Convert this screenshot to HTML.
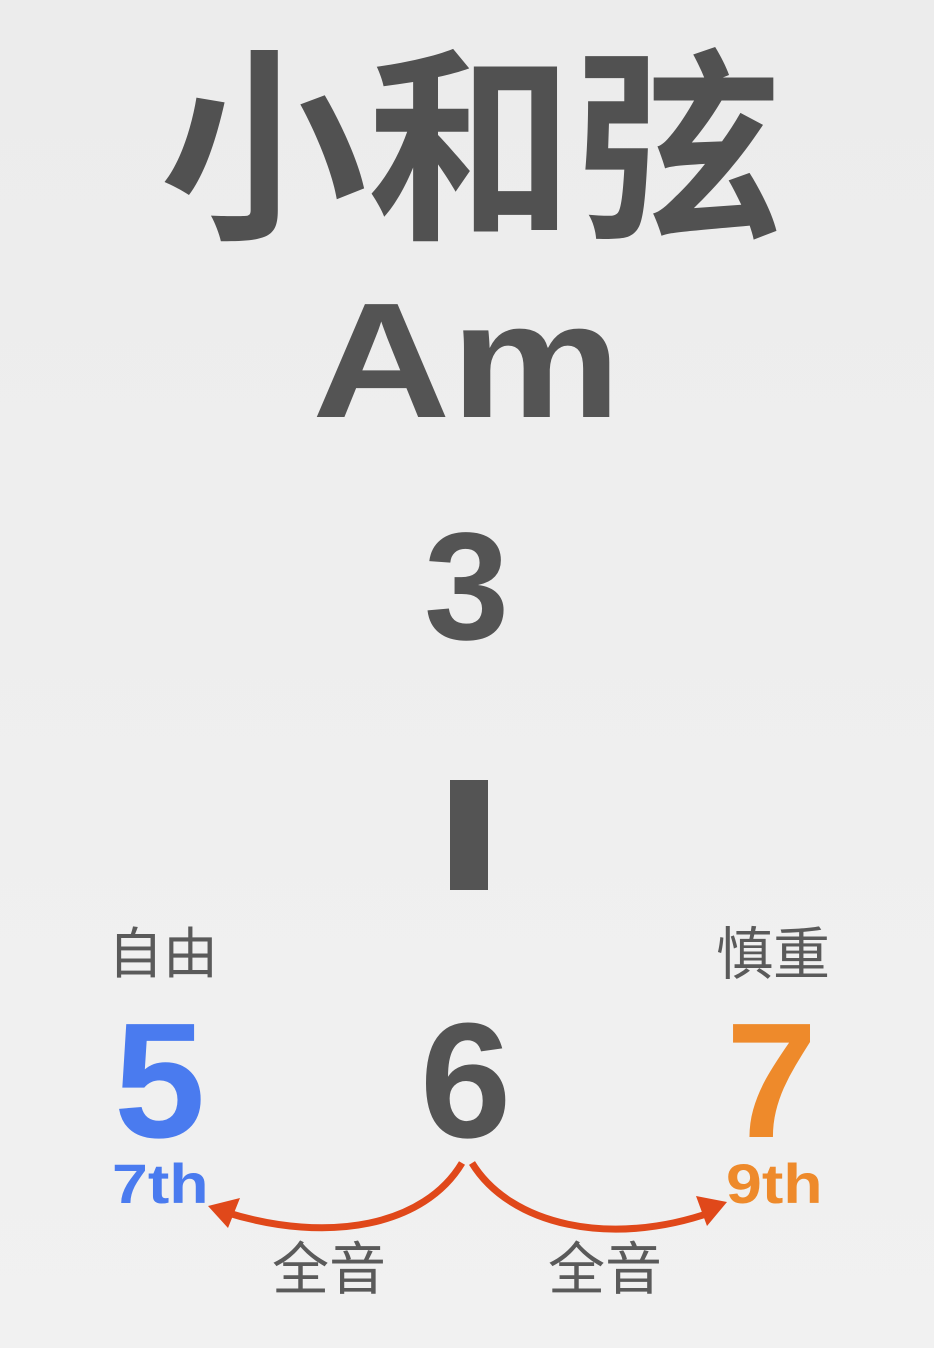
<!DOCTYPE html>
<html><head><meta charset="utf-8"><style>
html,body{margin:0;padding:0}
body{width:934px;height:1348px;position:relative;overflow:hidden;background:linear-gradient(180deg,#ececec 0%,#efefef 60%,#f1f1f1 100%);font-family:"Liberation Sans","Noto Sans CJK SC",sans-serif;color:#545454}
.a{position:absolute;line-height:1;white-space:nowrap}
.cjk{font-family:"Noto Sans CJK SC","WenQuanYi Zen Hei",sans-serif}
.b{font-weight:bold}
</style></head><body>
<div class="a cjk b" style="left:160px;top:30px;font-size:207px;color:#515151">小和弦</div>
<div class="a b" style="left:312px;top:279px;font-size:164px;transform:scaleX(1.17);transform-origin:left top">Am</div>
<div class="a b" style="left:424px;top:510px;font-size:153px">3</div>
<div class="a" style="left:450px;top:780px;width:38px;height:110px;background:#545454"></div>
<div class="a cjk" style="left:108px;top:922px;font-size:55px;color:#5a5a5a">自由</div>
<div class="a cjk" style="left:716px;top:922px;font-size:57px;color:#5a5a5a">慎重</div>
<div class="a b" style="left:114px;top:999px;font-size:164px;color:#4a7bef">5</div>
<div class="a b" style="left:420px;top:999px;font-size:164px">6</div>
<div class="a b" style="left:726px;top:999px;font-size:164px;color:#ee8a2b">7</div>
<div class="a b" style="left:112px;top:1156px;font-size:56px;color:#4a7bef;transform:scaleX(1.15);transform-origin:left top">7th</div>
<div class="a b" style="left:726px;top:1156px;font-size:56px;color:#ee8a2b;transform:scaleX(1.15);transform-origin:left top">9th</div>
<svg class="a" style="left:0;top:0" width="934" height="1348">
<path d="M462 1163 C425 1225 330 1245 225 1212" fill="none" stroke="#e0481a" stroke-width="7"/>
<polygon points="208,1206 240,1198 228,1228" fill="#e0481a"/>
<path d="M472 1163 C510 1225 610 1248 712 1212" fill="none" stroke="#e0481a" stroke-width="7"/>
<polygon points="727,1202 696,1196 707,1226" fill="#e0481a"/>
</svg>
<div class="a cjk" style="left:272px;top:1237px;font-size:57px;color:#5a5a5a">全音</div>
<div class="a cjk" style="left:548px;top:1237px;font-size:57px;color:#5a5a5a">全音</div>
</body></html>
